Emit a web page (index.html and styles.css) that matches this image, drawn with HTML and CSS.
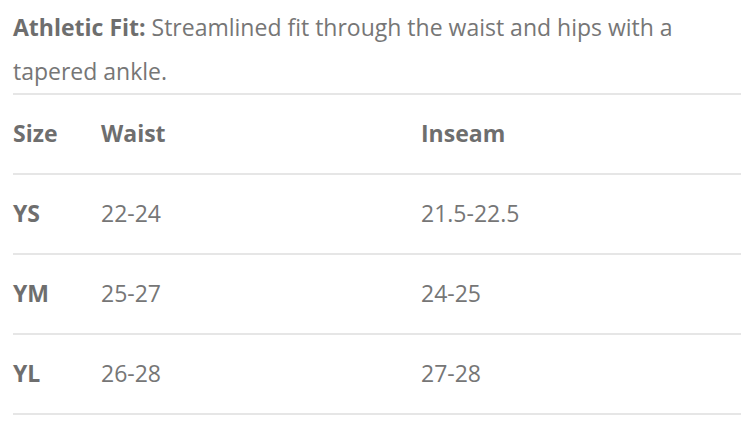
FILE: index.html
```html
<!DOCTYPE html>
<html lang="en">
<head>
<meta charset="utf-8">
<link rel="stylesheet" href="styles.css">
</head>
<body>
<div class="wrap">
  <p class="desc"><strong>Athletic Fit:</strong> Streamlined fit through the waist and hips with a tapered ankle.</p>
  <div class="table">
    <div class="row head">
      <div class="cell">Size</div>
      <div class="cell">Waist</div>
      <div class="cell">Inseam</div>
    </div>
    <div class="row">
      <div class="cell size">YS</div>
      <div class="cell">22-24</div>
      <div class="cell">21.5-22.5</div>
    </div>
    <div class="row">
      <div class="cell size">YM</div>
      <div class="cell">25-27</div>
      <div class="cell">24-25</div>
    </div>
    <div class="row">
      <div class="cell size">YL</div>
      <div class="cell">26-28</div>
      <div class="cell">27-28</div>
    </div>
  </div>
</div>
</body>
</html>
```
FILE: styles.css
```css
html, body {
  margin: 0;
  padding: 0;
  background: #ffffff;
}
body {
  font-family: "Open Sans", "Lato", sans-serif;
  color: #767676;
  font-size: 23px;
}
.wrap {
  padding: 5px 15px 0 13px;
}
.desc {
  margin: 0;
  line-height: 44px;
  max-width: 690px;
}
.desc strong {
  font-weight: 700;
  color: #6e6e6e;
}
.table {
  border-top: 2px solid #e6e6e6;
}
.row {
  display: grid;
  grid-template-columns: 88px 1fr 1fr;
  height: 78px;
  align-items: center;
  border-bottom: 2px solid #e6e6e6;
}
.cell {
  padding-bottom: 2px;
}
.head .cell,
.cell.size {
  font-weight: 700;
  color: #6e6e6e;
}
```
